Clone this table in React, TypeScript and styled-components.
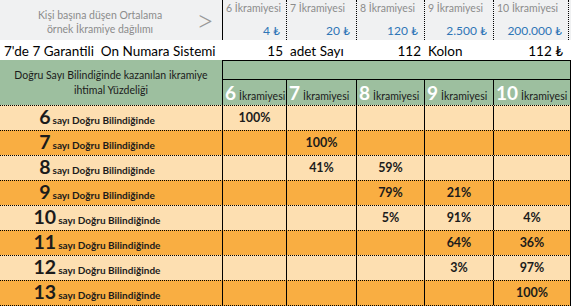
import React from 'react';
import styled, { createGlobalStyle } from 'styled-components';

const colors = {
    sheetGrey: '#f0f1f2',
    labelGrey: '#8c8c8c',
    blue: '#2e75b6',
    green: '#9dbf9f',
    lightOrange: '#fddfb1',
    darkOrange: '#f9ae42',
    ink: '#1b1b1b',
    line: '#000000',
};

const COLUMNS = '222px 64px 70px 68px 69px 78px';

const prizes = [
    { count: 6, amount: '4 ₺' },
    { count: 7, amount: '20 ₺' },
    { count: 8, amount: '120 ₺' },
    { count: 9, amount: '2.500 ₺' },
    { count: 10, amount: '200.000 ₺' },
];

// chance per known number, by prize column (6..10)
const odds: { known: number; values: string[] }[] = [
    { known: 6, values: ['100%', '', '', '', ''] },
    { known: 7, values: ['', '100%', '', '', ''] },
    { known: 8, values: ['', '41%', '59%', '', ''] },
    { known: 9, values: ['', '', '79%', '21%', ''] },
    { known: 10, values: ['', '', '5%', '91%', '4%'] },
    { known: 11, values: ['', '', '', '64%', '36%'] },
    { known: 12, values: ['', '', '', '3%', '97%'] },
    { known: 13, values: ['', '', '', '', '100%'] },
];

const GlobalStyle = createGlobalStyle`
    html, body {
        margin: 0;
        padding: 0;
        background: #ffffff;
    }
    body {
        font-family: 'Lato', 'Noto Sans', 'DejaVu Sans', sans-serif;
        color: ${colors.ink};
    }
    * {
        box-sizing: border-box;
    }
`;

export default function App() {
    return (
        <>
            <GlobalStyle />
            <Sheet>
                <TopRow>
                    <TopLeft>
                        <TopCaption>
                            Kişi başına düşen Ortalama
                            <br />
                            örnek İkramiye dağılımı
                        </TopCaption>
                        <Arrow>&gt;</Arrow>
                    </TopLeft>
                    {prizes.map((p, i) => (
                        <PrizeCell key={p.count} $first={i === 0} $last={i === prizes.length - 1}>
                            <PrizeLabel>{p.count} İkramiyesi</PrizeLabel>
                            <PrizeAmount>{p.amount}</PrizeAmount>
                        </PrizeCell>
                    ))}
                </TopRow>

                <InfoRow>
                    <InfoCell>{"7'de 7 Garantili  On Numara Sistemi"}</InfoCell>
                    <InfoCell $right>15</InfoCell>
                    <InfoCell>adet Sayı</InfoCell>
                    <InfoCell $right>112</InfoCell>
                    <InfoCell>Kolon</InfoCell>
                    <InfoCell $right $pad={8}>112 ₺</InfoCell>
                </InfoRow>

                <GreenBand>
                    <GreenCaption>
                        Doğru Sayı Bilindiğinde kazanılan ikramiye
                        <br />
                        ihtimal Yüzdeliği
                    </GreenCaption>
                    <GreenSpacer />
                    {prizes.map((p, i) => (
                        <HeadCell key={p.count} $last={i === prizes.length - 1}>
                            <HeadNumber>{p.count}</HeadNumber>
                            <HeadWord>İkramiyesi</HeadWord>
                        </HeadCell>
                    ))}
                </GreenBand>

                {odds.map((row, r) => (
                    <BodyRow key={row.known} $dark={r % 2 === 1} $last={r === odds.length - 1}>
                        <RowLabel>
                            <RowNumber>{row.known}</RowNumber>
                            <RowWords>sayı Doğru Bilindiğinde</RowWords>
                        </RowLabel>
                        {row.values.map((v, c) => (
                            <ValueCell key={c} $last={c === row.values.length - 1}>
                                {v}
                            </ValueCell>
                        ))}
                    </BodyRow>
                ))}
            </Sheet>
        </>
    );
}

const Sheet = styled.div`
    width: 571px;
    display: flex;
    flex-direction: column;
`;

const TopRow = styled.div`
    display: grid;
    grid-template-columns: ${COLUMNS};
    height: 40px;
    background: ${colors.sheetGrey};
`;

const TopLeft = styled.div`
    display: flex;
    align-items: center;
    padding-right: 8px;
`;

const TopCaption = styled.div`
    flex: 1;
    text-align: center;
    font-size: 10.5px;
    line-height: 14px;
    color: ${colors.labelGrey};
    padding: 3px 0 0 4px;
`;

const Arrow = styled.span`
    font-size: 31px;
    font-weight: 300;
    color: #999999;
    line-height: 1;
    margin-top: 1px;
`;

const PrizeCell = styled.div<{ $first?: boolean; $last?: boolean }>`
    display: flex;
    flex-direction: column;
    justify-content: space-between;
    padding: 2px 6px 2px 3px;
    border-left: 1px ${(p) => (p.$first ? 'solid' : 'dotted')} ${colors.line};
    border-right: ${(p) => (p.$last ? `1px dotted ${colors.line}` : 'none')};
    margin-right: ${(p) => (p.$last ? '2px' : '0')};
`;

const PrizeLabel = styled.span`
    font-size: 10.5px;
    color: ${colors.labelGrey};
    white-space: nowrap;
    line-height: 13px;
`;

const PrizeAmount = styled.span`
    align-self: flex-end;
    font-size: 12px;
    line-height: 14px;
    color: ${colors.blue};
    white-space: nowrap;
`;

const InfoRow = styled.div`
    display: grid;
    grid-template-columns: ${COLUMNS};
    height: 20px;
    background: #ffffff;
    align-items: end;
`;

const InfoCell = styled.div<{ $right?: boolean; $pad?: number }>`
    font-size: 13.5px;
    line-height: 17px;
    white-space: pre;
    color: #000000;
    text-align: ${(p) => (p.$right ? 'right' : 'left')};
    padding: ${(p) => (p.$right ? `0 ${p.$pad ?? 3}px 0 0` : '0 0 0 4px')};
`;

const GreenBand = styled.div`
    display: grid;
    grid-template-columns: ${COLUMNS};
    grid-template-rows: 20px 25px;
    background: ${colors.green};
`;

const GreenCaption = styled.div`
    grid-row: 1 / span 2;
    display: flex;
    align-items: center;
    justify-content: center;
    text-align: center;
    font-size: 10.5px;
    line-height: 15px;
    color: ${colors.ink};
    padding: 1px 0 0 0;
`;

const GreenSpacer = styled.div`
    grid-column: 2 / span 5;
    border: 1px solid ${colors.line};
`;

const HeadCell = styled.div<{ $last?: boolean }>`
    display: flex;
    align-items: baseline;
    gap: 3px;
    padding: 3px 0 0 2px;
    border-left: 1px solid ${colors.line};
    border-right: ${(p) => (p.$last ? `1px solid ${colors.line}` : 'none')};
    white-space: nowrap;
    overflow: hidden;
`;

const HeadNumber = styled.span`
    font-size: 19px;
    font-weight: 700;
    color: #ffffff;
    line-height: 20px;
`;

const HeadWord = styled.span`
    font-size: 10.5px;
    color: ${colors.ink};
`;

const BodyRow = styled.div<{ $dark: boolean; $last: boolean }>`
    display: grid;
    grid-template-columns: ${COLUMNS};
    height: ${(p) => (p.$last ? '26px' : '25px')};
    background: ${(p) => (p.$dark ? colors.darkOrange : colors.lightOrange)};
    border-top: 1px dotted ${colors.line};
    border-bottom: ${(p) => (p.$last ? `1px dotted ${colors.line}` : 'none')};
`;

const RowLabel = styled.div`
    display: flex;
    align-items: baseline;
    justify-content: center;
    gap: 2px;
    padding: 0 28px 0 0;
    white-space: nowrap;
`;

const RowNumber = styled.span`
    font-size: 19.5px;
    font-weight: 700;
    line-height: 22px;
    color: ${colors.ink};
`;

const RowWords = styled.span`
    font-size: 10px;
    font-weight: 700;
    color: ${colors.ink};
`;

const ValueCell = styled.div<{ $last?: boolean }>`
    display: flex;
    align-items: center;
    justify-content: center;
    padding-bottom: 2px;
    font-size: 12.5px;
    font-weight: 700;
    color: ${colors.ink};
    border-left: 1px solid ${colors.line};
    border-right: ${(p) => (p.$last ? `1px solid ${colors.line}` : 'none')};
`;
